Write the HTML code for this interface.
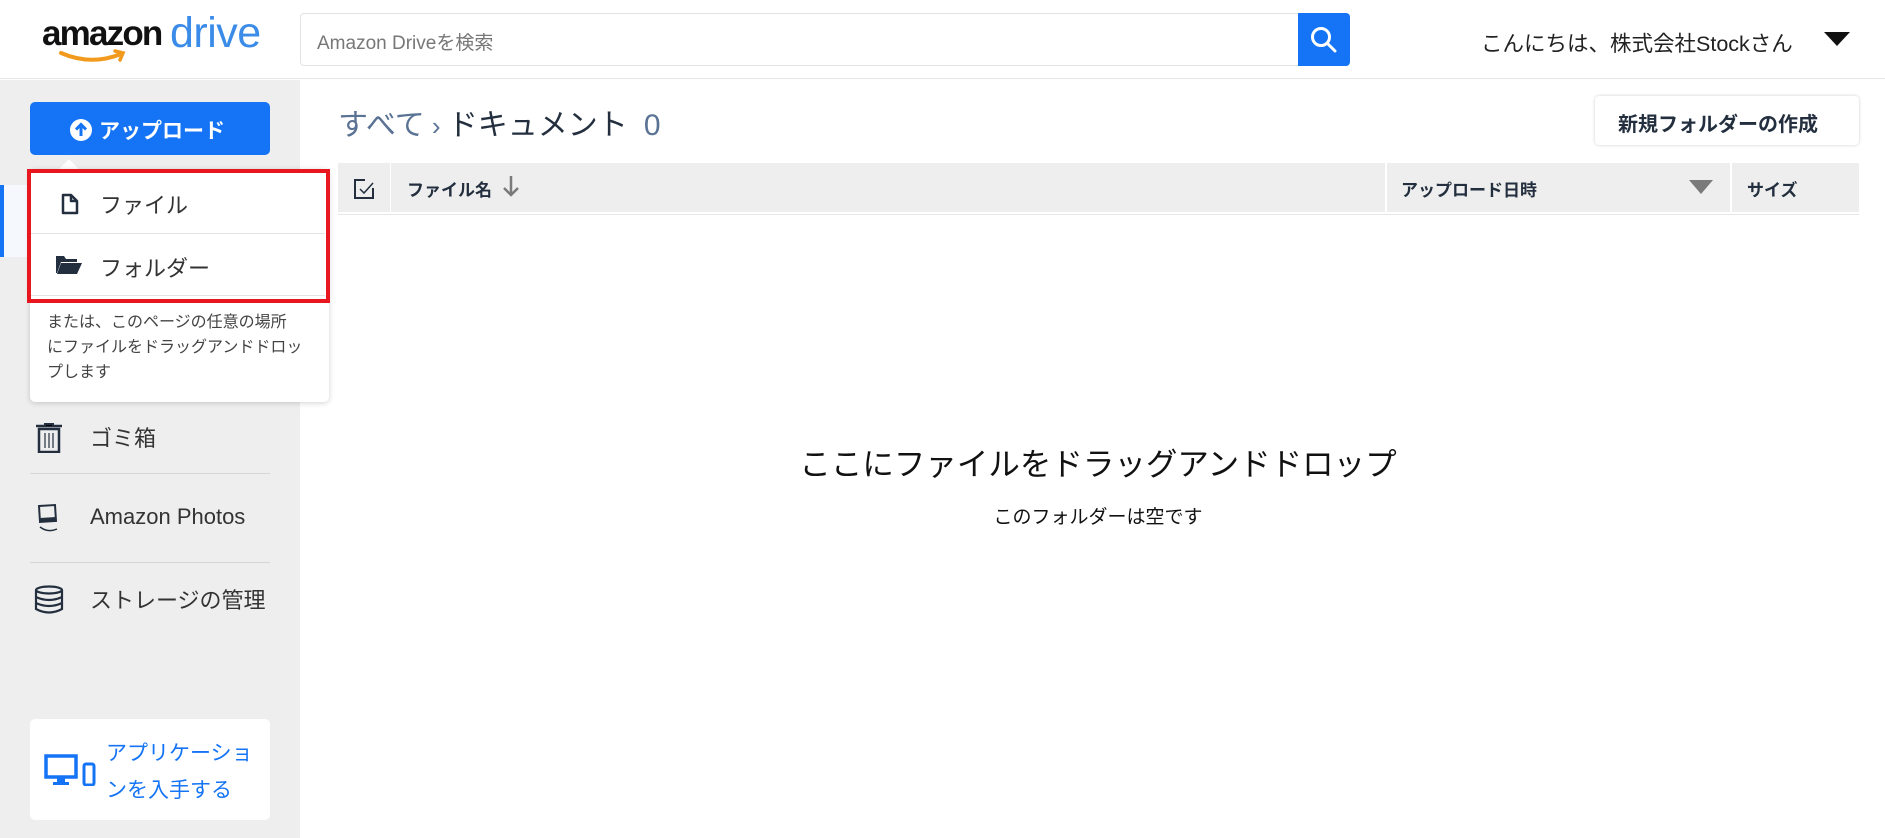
<!DOCTYPE html>
<html><head><meta charset="utf-8"><style>
*{box-sizing:border-box;margin:0;padding:0}
body{width:1885px;height:838px;overflow:hidden;background:#fff;font-family:"Liberation Sans","Noto Sans CJK JP",sans-serif;color:#232f3e;position:relative}
.abs{position:absolute}
</style></head><body>
<!-- header -->
<div class="abs" style="left:0;top:0;width:1885px;height:79px;border-bottom:1px solid #e6e6e6;background:#fff"></div>
<div class="abs" style="left:42px;top:14px;font-size:35px;font-weight:bold;color:#111;letter-spacing:-1.8px">amazon</div>
<div class="abs" style="left:170px;top:9px;font-size:43px;color:#3b8ce8;letter-spacing:-0.5px">drive</div>
<svg class="abs" style="left:58px;top:48px" width="70" height="18" viewBox="0 0 70 18"><path d="M3 5 Q33 18 63 6" stroke="#f29a1e" stroke-width="4" fill="none" stroke-linecap="round"/><path d="M57 3 L65 5 L62 12" stroke="#f29a1e" stroke-width="3.5" fill="none" stroke-linecap="round"/></svg>
<div class="abs" style="left:300px;top:13px;width:999px;height:53px;border:1px solid #e3e3e3;border-radius:4px 0 0 4px;font-size:19px;color:#777;padding:14px 0 0 16px">Amazon Driveを検索</div>
<div class="abs" style="left:1298px;top:13px;width:52px;height:53px;background:#1574f6;border-radius:0 4px 4px 0"></div>
<svg class="abs" style="left:1309px;top:25px" width="30" height="30" viewBox="0 0 30 30"><circle cx="12" cy="12" r="8.5" stroke="#fff" stroke-width="3" fill="none"/><path d="M18 18 L26 26" stroke="#fff" stroke-width="3" stroke-linecap="round"/></svg>
<div class="abs" style="left:1481px;top:27px;font-size:21.5px;color:#222">こんにちは、株式会社Stockさん</div>
<svg class="abs" style="left:1824px;top:32px" width="26" height="15"><path d="M0 0H26L13 14Z" fill="#111"/></svg>
<!-- sidebar -->
<div class="abs" style="left:0;top:80px;width:300px;height:758px;background:#eeeeee"></div>
<div class="abs" style="left:0;top:185px;width:300px;height:72px;background:#f5f8fd"></div>
<div class="abs" style="left:0;top:185px;width:4px;height:72px;background:#1574f6"></div>
<div class="abs" style="left:30px;top:102px;width:240px;height:53px;background:#1574f6;border-radius:5px;color:#fff;font-weight:bold;font-size:21px;padding:13px 0 0 39px">
<svg style="position:absolute;left:39px;top:16px" width="24" height="24" viewBox="0 0 24 24"><circle cx="12" cy="12" r="11" fill="#fff"/><path d="M12 18V7M7 11.5L12 6.5L17 11.5" stroke="#1574f6" stroke-width="3" fill="none"/></svg>
<span style="margin-left:30px">アップロード</span></div>
<!-- popup -->
<div class="abs" style="left:62px;top:162px;width:14px;height:14px;background:#fff;transform:rotate(45deg)"></div>
<div class="abs" style="left:30px;top:169px;width:299px;height:233px;background:#fff;border-radius:5px;box-shadow:0 1px 6px rgba(0,0,0,.18)"></div>
<div class="abs" style="left:30px;top:233px;width:295px;height:1px;background:#e3e3e3"></div>
<div class="abs" style="left:30px;top:295px;width:295px;height:1px;background:#e3e3e3"></div>
<div class="abs" style="left:27px;top:169px;width:303px;height:134px;border:4px solid #e8171f"></div>
<svg class="abs" style="left:60px;top:193px" width="20" height="22" viewBox="0 0 20 22"><path d="M3 2H11L17 8V20H3Z M11 2V8H17" stroke="#232f3e" stroke-width="2.5" fill="none" stroke-linejoin="round"/></svg>
<div class="abs" style="left:100px;top:188px;font-size:22px;color:#333">ファイル</div>
<svg class="abs" style="left:55px;top:253px" width="28" height="22" viewBox="0 0 28 22"><path d="M1 3H9L11 6H22V9H6L2 20H1Z" fill="#232f3e"/><path d="M6 10H27L22 21H2Z" fill="#232f3e"/></svg>
<div class="abs" style="left:100px;top:251px;font-size:22px;color:#333">フォルダー</div>
<div class="abs" style="left:47px;top:310px;width:275px;font-size:16px;line-height:25px;color:#444">または、このページの任意の場所<br>にファイルをドラッグアンドドロッ<br>プします</div>
<!-- sidebar items -->
<svg class="abs" style="left:35px;top:423px" width="28" height="30" viewBox="0 0 28 30"><path d="M1 3H27" stroke="#232f3e" stroke-width="2.5"/><path d="M10 3V1H18V3" stroke="#232f3e" stroke-width="2"/><path d="M4 6H24V29H4Z" stroke="#232f3e" stroke-width="2.5" fill="none"/><path d="M10 10V25M14 10V25M18 10V25" stroke="#232f3e" stroke-width="1.2"/></svg>
<div class="abs" style="left:90px;top:421px;font-size:22px;color:#333">ゴミ箱</div>
<div class="abs" style="left:30px;top:473px;width:240px;height:1px;background:#d6d6d6"></div>
<svg class="abs" style="left:35px;top:503px" width="28" height="32" viewBox="0 0 28 32"><path d="M4 3L20 2L21 18L5 19Z" stroke="#232f3e" stroke-width="2" fill="none"/><path d="M5 15L21 14L21 18L5 19Z" fill="#232f3e"/><path d="M5 24Q13 30 22 26" stroke="#232f3e" stroke-width="1.5" fill="none"/></svg>
<div class="abs" style="left:90px;top:504px;font-size:22px;color:#333">Amazon Photos</div>
<div class="abs" style="left:30px;top:562px;width:240px;height:1px;background:#d6d6d6"></div>
<svg class="abs" style="left:34px;top:585px" width="30" height="29" viewBox="0 0 30 29"><ellipse cx="15" cy="5" rx="13" ry="3.5" stroke="#232f3e" stroke-width="2.2" fill="none"/><path d="M2 5V24Q15 31 28 24V5M2 12Q15 18 28 12M2 18Q15 24 28 18" stroke="#232f3e" stroke-width="2.2" fill="none"/></svg>
<div class="abs" style="left:90px;top:583px;font-size:22px;color:#333">ストレージの管理</div>
<div class="abs" style="left:30px;top:719px;width:240px;height:101px;background:#fff;border-radius:5px"></div>
<svg class="abs" style="left:44px;top:754px" width="52" height="32" viewBox="0 0 52 32"><rect x="2" y="2" width="30" height="21" stroke="#1574f6" stroke-width="3.5" fill="none"/><rect x="13" y="24" width="8" height="4" fill="#1574f6"/><rect x="9" y="28" width="16" height="3" fill="#1574f6"/><rect x="40" y="10" width="10" height="21" rx="2" stroke="#1574f6" stroke-width="3" fill="none"/></svg>
<div class="abs" style="left:106px;top:735px;width:150px;font-size:21px;line-height:37px;color:#1574f6">アプリケーションを入手する</div>
<!-- main -->
<div class="abs" style="left:338px;top:100px;font-size:30px;color:#5a7294">すべて<span style="font-size:26px"> › </span><span style="color:#232f3e">ドキュメント</span><span style="margin-left:16px">0</span></div>
<div class="abs" style="left:1595px;top:96px;width:264px;height:49px;background:#fff;border-radius:4px;box-shadow:0 0 3px rgba(0,0,0,.2);font-size:20px;font-weight:bold;padding:12px 0 0 23px;color:#232f3e;white-space:nowrap">新規フォルダーの作成</div>
<div class="abs" style="left:338px;top:163px;width:1521px;height:49px;background:#eeeeee"></div>
<div class="abs" style="left:390px;top:163px;width:1px;height:49px;background:#fff"></div>
<div class="abs" style="left:1385px;top:163px;width:2px;height:49px;background:#fff"></div>
<div class="abs" style="left:1730px;top:163px;width:2px;height:49px;background:#fff"></div>
<div class="abs" style="left:338px;top:212px;width:1521px;height:3px;background:#fff;border-bottom:1px solid #e6e6e6"></div>
<svg class="abs" style="left:353px;top:178px" width="22" height="22" viewBox="0 0 22 22"><path d="M12 2H2V20H20V10" stroke="#232f3e" stroke-width="2" fill="none"/><path d="M7 11L11 15L20 5" stroke="#232f3e" stroke-width="1.5" fill="none"/></svg>
<div class="abs" style="left:407px;top:176px;font-size:17px;font-weight:bold">ファイル名</div>
<svg class="abs" style="left:502px;top:174px" width="18" height="24" viewBox="0 0 18 24"><path d="M9 2V21M2 14L9 21L16 14" stroke="#7a7a7a" stroke-width="2.5" fill="none"/></svg>
<div class="abs" style="left:1401px;top:176px;font-size:17px;font-weight:bold">アップロード日時</div>
<svg class="abs" style="left:1689px;top:180px" width="24" height="15"><path d="M0 0H24L12 14Z" fill="#7a7a7a"/></svg>
<div class="abs" style="left:1747px;top:176px;font-size:17px;font-weight:bold">サイズ</div>
<div class="abs" style="left:300px;top:439px;width:1596px;text-align:center;font-size:31.5px;color:#111">ここにファイルをドラッグアンドドロップ</div>
<div class="abs" style="left:300px;top:502px;width:1596px;text-align:center;font-size:19px;color:#111">このフォルダーは空です</div>
</body></html>
